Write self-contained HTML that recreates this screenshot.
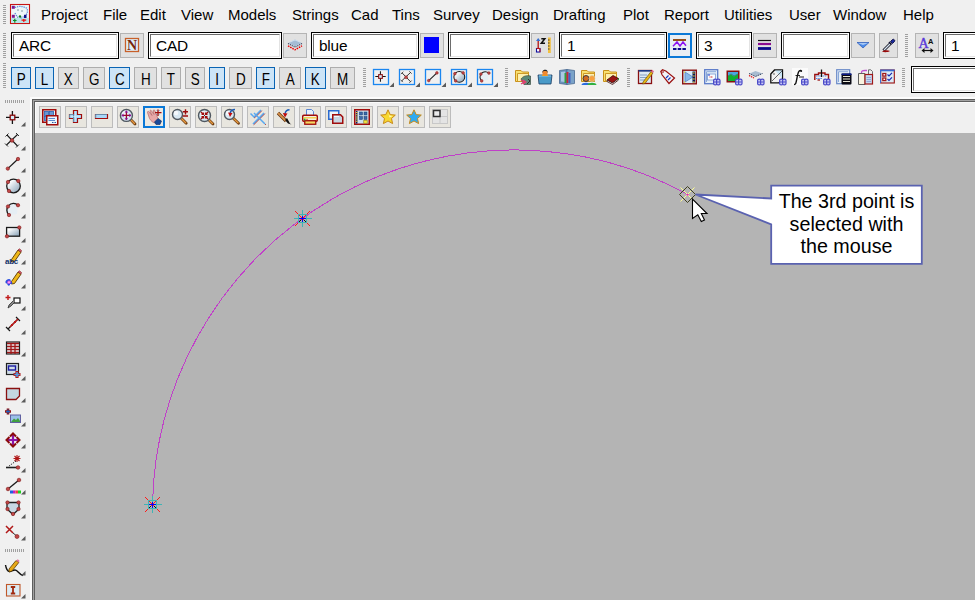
<!DOCTYPE html><html><head><meta charset="utf-8"><style>
*{margin:0;padding:0;box-sizing:border-box}
html,body{width:975px;height:600px;overflow:hidden;background:#f0f0f0;font-family:"Liberation Sans",sans-serif;color:#000}
.a{position:absolute}
.m{position:absolute;top:6px;font-size:15px;line-height:17px;color:#000;white-space:nowrap}
.grip{position:absolute;width:3px;background:repeating-linear-gradient(to bottom,#a0a0a0 0 1px,transparent 1px 2px)}
.gripv{position:absolute;height:3px;background:repeating-linear-gradient(to right,#a0a0a0 0 1px,transparent 1px 2px)}
.inp{position:absolute;top:32px;height:27px;border:1px solid #000;background:#fff}
.inp::after{content:"";position:absolute;left:1px;top:1px;right:1px;bottom:1px;border-top:1px solid #6d6d6d;border-left:1px solid #6d6d6d;border-right:1px solid #e3e3e3;border-bottom:1px solid #e3e3e3}
.inp span{position:absolute;left:7px;top:4px;font-size:15.4px;line-height:17px;letter-spacing:-0.2px}
.btn{position:absolute;top:33px;height:25px;width:24px;border:1px solid #b4b4b4;background:#e1e1e1}
.lb{position:absolute;top:67px;height:22px;border:1px solid #adadad;background:#e1e1e1;font-size:16px;line-height:24px;text-align:center}
.lb span{display:inline-block;transform:scaleX(0.84)}
.lb.on{border-color:#0a64b4;background:#cce4f7}
.cb{position:absolute;top:106px;width:22px;height:22px;border:1px solid #bcbcbc;background:#e8e6df}
</style></head><body>
<div class="grip" style="left:3px;top:5px;height:19px"></div>
<div class="m" style="left:41px">Project</div>
<div class="m" style="left:103px">File</div>
<div class="m" style="left:140px">Edit</div>
<div class="m" style="left:181px">View</div>
<div class="m" style="left:228px">Models</div>
<div class="m" style="left:292px">Strings</div>
<div class="m" style="left:351px">Cad</div>
<div class="m" style="left:392px">Tins</div>
<div class="m" style="left:433px">Survey</div>
<div class="m" style="left:492px">Design</div>
<div class="m" style="left:553px">Drafting</div>
<div class="m" style="left:623px">Plot</div>
<div class="m" style="left:664px">Report</div>
<div class="m" style="left:724px">Utilities</div>
<div class="m" style="left:789px">User</div>
<div class="m" style="left:833px">Window</div>
<div class="m" style="left:903px">Help</div>
<div class="grip" style="left:3px;top:33px;height:25px"></div>
<div class="inp" style="left:11px;top:32px;width:108px;height:27px"><span>ARC</span></div>
<div class="btn" style="left:120px;width:24px;"></div>
<div class="inp" style="left:148px;top:32px;width:134px;height:27px"><span>CAD</span></div>
<div class="btn" style="left:283px;width:24px;"></div>
<div class="inp" style="left:311px;top:32px;width:108px;height:27px"><span>blue</span></div>
<div class="btn" style="left:420px;width:24px;"></div>
<div class="a" style="left:424px;top:37px;width:15px;height:16px;background:#0000ff"></div>
<div class="inp" style="left:448px;top:32px;width:82px;height:27px"></div>
<div class="btn" style="left:531px;width:24px;"></div>
<div class="inp" style="left:559px;top:32px;width:108px;height:27px"><span>1</span></div>
<div class="btn" style="left:668px;width:24px;border:2px solid #0a78d7;background:#e8eef4"></div>
<div class="inp" style="left:696px;top:32px;width:56px;height:27px"><span>3</span></div>
<div class="btn" style="left:753px;width:24px;"></div>
<div class="inp" style="left:781px;top:32px;width:69px;height:27px"></div>
<div class="btn" style="left:851px;width:24px;"></div>
<div class="btn" style="left:879px;width:19px;"></div>
<div class="grip" style="left:905px;top:34px;height:23px"></div>
<div class="btn" style="left:915px;width:24px;"></div>
<div class="inp" style="left:943px;top:32px;width:60px;height:27px"><span>1</span></div>
<div class="grip" style="left:3px;top:63px;height:26px"></div>
<div class="lb on" style="left:11px;width:20px"><span>P</span></div>
<div class="lb on" style="left:35px;width:19px"><span>L</span></div>
<div class="lb" style="left:58px;width:21px"><span>X</span></div>
<div class="lb" style="left:83px;width:22px"><span>G</span></div>
<div class="lb on" style="left:109px;width:21px"><span>C</span></div>
<div class="lb" style="left:134px;width:23px"><span>H</span></div>
<div class="lb" style="left:161px;width:20px"><span>T</span></div>
<div class="lb" style="left:185px;width:20px"><span>S</span></div>
<div class="lb on" style="left:209px;width:16px"><span>I</span></div>
<div class="lb" style="left:229px;width:23px"><span>D</span></div>
<div class="lb on" style="left:256px;width:19px"><span>F</span></div>
<div class="lb" style="left:279px;width:22px"><span>A</span></div>
<div class="lb on" style="left:305px;width:21px"><span>K</span></div>
<div class="lb" style="left:330px;width:25px"><span>M</span></div>
<div class="grip" style="left:363px;top:68px;height:20px"></div>
<div class="grip" style="left:505px;top:68px;height:20px"></div>
<div class="grip" style="left:627px;top:68px;height:20px"></div>
<div class="grip" style="left:902px;top:68px;height:20px"></div>
<div class="inp" style="left:911px;top:66px;width:80px;height:27px"></div>
<div class="a" style="left:30px;top:97px;width:945px;height:503px;background:#fcfcfc"></div>
<div class="a" style="left:32px;top:99px;width:943px;height:501px;background:#5f5f5f"></div>
<div class="a" style="left:33px;top:100px;width:942px;height:500px;background:#a2a2a2"></div>
<div class="a" style="left:34px;top:101px;width:941px;height:499px;background:#5f5f5f"></div>
<div class="a" style="left:35px;top:102px;width:940px;height:31px;background:#fbfbfb"></div>
<div class="a" style="left:36px;top:103px;width:939px;height:30px;background:#f0f0f0"></div>
<div class="a" style="left:35px;top:133px;width:940px;height:467px;background:#b4b4b4"></div>
<div class="cb" style="left:39px"></div>
<div class="cb" style="left:65px"></div>
<div class="cb" style="left:91px"></div>
<div class="cb" style="left:117px"></div>
<div class="cb" style="left:143px;border:2px solid #0a78d7;background:#ede9e2"></div>
<div class="cb" style="left:169px"></div>
<div class="cb" style="left:195px"></div>
<div class="cb" style="left:221px"></div>
<div class="cb" style="left:247px"></div>
<div class="cb" style="left:273px"></div>
<div class="cb" style="left:299px"></div>
<div class="cb" style="left:325px"></div>
<div class="cb" style="left:351px"></div>
<div class="cb" style="left:377px"></div>
<div class="cb" style="left:403px"></div>
<div class="cb" style="left:429px"></div>
<div class="gripv" style="left:5px;top:100px;width:20px"></div>
<div class="gripv" style="left:5px;top:549px;width:19px"></div>
<svg class="a" style="left:0;top:0" width="975" height="600" viewBox="0 0 975 600"><g transform="translate(5,110)"><path d="M7.4 1V14M1 7.4H14" stroke="#141414" stroke-width="1.3"/><rect x="5.2" y="5.2" width="4.6" height="4.6" fill="#d4ecf8" stroke="#8a0808" stroke-width="1.3"/></g><path d="M21 126.5L25.5 126.5L25.5 122Z" fill="#5a5a5a"/><g transform="translate(5,132)"><path d="M1.5 13L12.5 2.5M2 3L12.5 14" stroke="#1a1a1a" stroke-width="1.1"/><path d="M0 11.5L3 14.5M11 1L14 4M0.5 4.5L3.5 1.5M11 15.5L14 12.5" stroke="#1a1a1a" stroke-width="0.9"/><circle cx="7" cy="8.5" r="1.8" fill="#c04848" stroke="#801818" stroke-width="0.6"/></g><path d="M21 150.5L25.5 150.5L25.5 146Z" fill="#5a5a5a"/><g transform="translate(5,156)"><path d="M2.8 12.6L13 3" stroke="#1a1a1a" stroke-width="1.3"/><circle cx="2.8" cy="12.6" r="1.7" fill="#c04848" stroke="#801818" stroke-width="0.6"/><circle cx="13" cy="3" r="1.7" fill="#c04848" stroke="#801818" stroke-width="0.6"/></g><path d="M21 172.5L25.5 172.5L25.5 168Z" fill="#5a5a5a"/><g transform="translate(5,178)"><defs><linearGradient id="gc" x1="0.2" y1="0.2" x2="0.9" y2="0.9"><stop offset="0" stop-color="#ffffff"/><stop offset="1" stop-color="#90a8bc"/></linearGradient></defs><circle cx="8.5" cy="8" r="6.8" fill="url(#gc)" stroke="#1a1a1a" stroke-width="1.3"/><circle cx="3" cy="4" r="1.7" fill="#c04848" stroke="#801818" stroke-width="0.6"/><circle cx="13.3" cy="3" r="1.7" fill="#c04848" stroke="#801818" stroke-width="0.6"/><circle cx="4" cy="13" r="1.7" fill="#c04848" stroke="#801818" stroke-width="0.6"/></g><path d="M21 196.5L25.5 196.5L25.5 192Z" fill="#5a5a5a"/><g transform="translate(5,202)"><path d="M4 13A6.3 6.3 0 0 1 13 3.2L12 12Z" fill="#e6eef4"/><path d="M4 13A6.3 6.3 0 0 1 13 3.2" fill="none" stroke="#1a1a1a" stroke-width="1.3"/><circle cx="3" cy="4.5" r="1.7" fill="#c04848" stroke="#801818" stroke-width="0.6"/><circle cx="13" cy="3.2" r="1.7" fill="#c04848" stroke="#801818" stroke-width="0.6"/><circle cx="4" cy="13" r="1.7" fill="#c04848" stroke="#801818" stroke-width="0.6"/></g><path d="M21 218.5L25.5 218.5L25.5 214Z" fill="#5a5a5a"/><g transform="translate(5,224)"><rect x="1.6" y="3.5" width="13" height="8.7" fill="url(#gc)" stroke="#1a1a1a" stroke-width="1.3"/><circle cx="14.3" cy="3.5" r="1.7" fill="#c04848" stroke="#801818" stroke-width="0.6"/><circle cx="2" cy="12.3" r="1.7" fill="#c04848" stroke="#801818" stroke-width="0.6"/></g><path d="M21 242.5L25.5 242.5L25.5 238Z" fill="#5a5a5a"/><g transform="translate(5,248)"><path d="M6.5 11.5L13 2L16 4.2L9.5 13.5L6.5 14Z" fill="#f0b818" stroke="#5a3a00" stroke-width="0.9"/><path d="M13 2L16 4.2L16.5 2.5L14.5 0.8Z" fill="#d86070" stroke="#7a2020" stroke-width="0.6"/><text x="0" y="15.8" font-family="Liberation Sans" font-weight="bold" font-size="8" fill="#10306a" letter-spacing="-0.3">abc</text></g><path d="M21 264.5L25.5 264.5L25.5 260Z" fill="#5a5a5a"/><g transform="translate(5,270)"><path d="M6.5 11.5L13 2L16 4.2L9.5 13.5L6.5 14Z" fill="#f0b818" stroke="#5a3a00" stroke-width="0.9"/><path d="M13 2L16 4.2L16.5 2.5L14.5 0.8Z" fill="#d86070" stroke="#7a2020" stroke-width="0.6"/><path d="M1.5 10C4 8 6.5 9 5.5 11.5C8 11 8 14.5 5 14C5.5 16.5 1.5 16 2.5 13.5C0 14 0 11 1.5 10Z" fill="#2a50e0"/><circle cx="4" cy="12.3" r="1.7" fill="#e050e0"/><circle cx="4" cy="12.3" r="0.7" fill="#fff"/></g><path d="M21 288.5L25.5 288.5L25.5 284Z" fill="#5a5a5a"/><g transform="translate(5,294)"><path d="M3 1V6M0.5 3.5H5.5" stroke="#c01818" stroke-width="1.4"/><rect x="9" y="4" width="6" height="5" fill="#fff" stroke="#101010" stroke-width="1.2"/><path d="M8 7L4 11L3 14L6 12L10 8" fill="#888" stroke="#303030" stroke-width="0.8"/></g><path d="M21 310.5L25.5 310.5L25.5 306Z" fill="#5a5a5a"/><g transform="translate(5,316)"><path d="M1 11L5 15M11 1L15 5M3 13L13 3" stroke="#181818" stroke-width="1.2"/><path d="M5 11L13 3" stroke="#c01818" stroke-width="1.3"/><path d="M6 8L8 10M9 5L11 7" stroke="#c01818" stroke-width="1"/></g><path d="M21 334.5L25.5 334.5L25.5 330Z" fill="#5a5a5a"/><g transform="translate(5,340)"><rect x="1.5" y="2" width="13" height="12" fill="#e8eef2" stroke="#202020" stroke-width="1.2"/><path d="M2 3.5H14M2 6.5H14M2 9.5H14M2 12.5H14" stroke="#a01818" stroke-width="1.6"/><path d="M6 3V14M10 3V14" stroke="#a01818" stroke-width="1.3"/></g><path d="M21 356.5L25.5 356.5L25.5 352Z" fill="#5a5a5a"/><g transform="translate(5,362)"><rect x="1.5" y="1.5" width="12" height="11" fill="#d0dde6" stroke="#202020" stroke-width="1.2"/><rect x="3.5" y="4" width="7" height="4" fill="none" stroke="#1a1aa0" stroke-width="1.4"/><path d="M12 9V16M8.5 12.5H15.5" stroke="#b01818" stroke-width="3.2"/><path d="M12 10V15M9.5 12.5H14.5" stroke="#4aa0e8" stroke-width="1.5"/></g><path d="M21 380.5L25.5 380.5L25.5 376Z" fill="#5a5a5a"/><g transform="translate(5,386)"><path d="M1.5 2.5H14.5V10L11 13.5H1.5Z" fill="#c4d6e0" stroke="#8a1010" stroke-width="1.3"/></g><path d="M21 402.5L25.5 402.5L25.5 398Z" fill="#5a5a5a"/><g transform="translate(5,408)"><path d="M3 0.5V6.5M0 3.5H6" stroke="#8a1010" stroke-width="2.6"/><path d="M3 1.5V5.5M1 3.5H5" stroke="#2060c0" stroke-width="1.2"/><rect x="5.5" y="7" width="10" height="7.5" fill="#9ac0e8" stroke="#6060a0" stroke-width="1"/><path d="M6 14L9 10.5L11 12L13 10L15 13V14Z" fill="#40a040"/></g><path d="M21 426.5L25.5 426.5L25.5 422Z" fill="#5a5a5a"/><g transform="translate(5,432)"><path d="M8 2.5V13.5M2.5 8H13.5" stroke="#8c14a8" stroke-width="2.2"/><path d="M5 4.5L8 1.5L11 4.5M5 11.5L8 14.5L11 11.5M4.5 5L1.5 8L4.5 11M11.5 5L14.5 8L11.5 11" fill="none" stroke="#8a0a0a" stroke-width="2"/></g><path d="M21 448.5L25.5 448.5L25.5 444Z" fill="#5a5a5a"/><g transform="translate(5,454)"><path d="M12 1V8M8.5 4.5H15.5M9.5 2L14.5 7M14.5 2L9.5 7" stroke="#b01818" stroke-width="1.1"/><path d="M11 7L4 12" stroke="#202020" stroke-width="1" stroke-dasharray="1.2 1.2"/><path d="M1 13.5H13" stroke="#202020" stroke-width="1.6"/><circle cx="13" cy="13.5" r="1.8" fill="#c04848" stroke="#801818" stroke-width="0.6"/></g><path d="M21 472.5L25.5 472.5L25.5 468Z" fill="#5a5a5a"/><g transform="translate(5,478)"><path d="M3 11L14 2" stroke="#181818" stroke-width="1.3"/><circle cx="3" cy="11" r="1.8" fill="#c04848" stroke="#801818" stroke-width="0.6"/><circle cx="14" cy="2" r="1.8" fill="#c04848" stroke="#801818" stroke-width="0.6"/><rect x="5" y="12.5" width="3" height="3" fill="#2060e0"/><rect x="8" y="12.5" width="2.5" height="3" fill="#c020c0"/><rect x="10.5" y="12.5" width="2.5" height="3" fill="#f04040"/><rect x="13" y="12.5" width="3" height="3" fill="#20d020"/></g><path d="M21 494.5L25.5 494.5L25.5 490Z" fill="#5a5a5a"/><g transform="translate(5,500)"><path d="M2 2.5H14V9L8 14.5L2 9Z" fill="#c8d8e4" stroke="#202020" stroke-width="1.3"/><circle cx="2.5" cy="2.5" r="1.7" fill="#c04848" stroke="#801818" stroke-width="0.6"/><circle cx="13.5" cy="2.5" r="1.7" fill="#c04848" stroke="#801818" stroke-width="0.6"/><circle cx="2.5" cy="9" r="1.7" fill="#c04848" stroke="#801818" stroke-width="0.6"/><circle cx="13.5" cy="9" r="1.7" fill="#c04848" stroke="#801818" stroke-width="0.6"/><circle cx="8" cy="14" r="1.7" fill="#c04848" stroke="#801818" stroke-width="0.6"/></g><path d="M21 518.5L25.5 518.5L25.5 514Z" fill="#5a5a5a"/><g transform="translate(5,524)"><path d="M1 2L8 9M8 2L1 9" stroke="#b01818" stroke-width="1.5"/><path d="M8 9L13 13" stroke="#303030" stroke-width="1"/><circle cx="12" cy="12.5" r="2" fill="#c04848" stroke="#801818" stroke-width="0.6"/></g><path d="M21 540.5L25.5 540.5L25.5 536Z" fill="#5a5a5a"/><g transform="translate(5,559)"><path d="M0.5 6C1 9 2.5 13 5 12.5C8 12 9 10 11.5 11.5C13.5 13 15 16 18 16.5" fill="none" stroke="#101010" stroke-width="1.4"/><path d="M4 10L11 1.5L13.8 3.5L7 12L4 13Z" fill="#e8a818" stroke="#5a3a00" stroke-width="0.8"/><path d="M11 1.5L13.8 3.5L14.5 1.8L12.8 0.3Z" fill="#e07a9a"/></g><path d="M21 575.5L25.5 575.5L25.5 571Z" fill="#5a5a5a"/><g transform="translate(5,582)"><rect x="1.5" y="2.5" width="13.5" height="11.5" fill="#dcecf4" stroke="#c0582a" stroke-width="1.1"/><path d="M5.8 5H10.2M5.8 11.5H10.2M8 5V11.5" stroke="#a02a10" stroke-width="1.8"/></g><path d="M21 598.5L25.5 598.5L25.5 594Z" fill="#5a5a5a"/><rect x="373.5" y="69.5" width="15" height="15" fill="none" stroke="#1a86f0" stroke-width="1.3"/><g transform="translate(374.5,70.5) scale(0.8)"><path d="M7.4 1V14M1 7.4H14" stroke="#141414" stroke-width="1.3"/><rect x="5.2" y="5.2" width="4.6" height="4.6" fill="#d4ecf8" stroke="#8a0808" stroke-width="1.3"/></g><path d="M389.5 87.0L394.0 87.0L394.0 82.5Z" fill="#5a5a5a"/><rect x="399.5" y="69.5" width="15" height="15" fill="none" stroke="#1a86f0" stroke-width="1.3"/><g transform="translate(400.5,70.5) scale(0.8)"><path d="M1.5 13L12.5 2.5M2 3L12.5 14" stroke="#1a1a1a" stroke-width="1.1"/><path d="M0 11.5L3 14.5M11 1L14 4M0.5 4.5L3.5 1.5M11 15.5L14 12.5" stroke="#1a1a1a" stroke-width="0.9"/><circle cx="7" cy="8.5" r="1.8" fill="#c04848" stroke="#801818" stroke-width="0.6"/></g><path d="M415.5 87.0L420.0 87.0L420.0 82.5Z" fill="#5a5a5a"/><rect x="425.5" y="69.5" width="15" height="15" fill="none" stroke="#1a86f0" stroke-width="1.3"/><g transform="translate(426.5,70.5) scale(0.8)"><path d="M2.8 12.6L13 3" stroke="#1a1a1a" stroke-width="1.3"/><circle cx="2.8" cy="12.6" r="1.7" fill="#c04848" stroke="#801818" stroke-width="0.6"/><circle cx="13" cy="3" r="1.7" fill="#c04848" stroke="#801818" stroke-width="0.6"/></g><path d="M441.5 87.0L446.0 87.0L446.0 82.5Z" fill="#5a5a5a"/><rect x="451.5" y="69.5" width="15" height="15" fill="none" stroke="#1a86f0" stroke-width="1.3"/><g transform="translate(452.5,70.5) scale(0.8)"><defs><linearGradient id="gc" x1="0.2" y1="0.2" x2="0.9" y2="0.9"><stop offset="0" stop-color="#ffffff"/><stop offset="1" stop-color="#90a8bc"/></linearGradient></defs><circle cx="8.5" cy="8" r="6.8" fill="url(#gc)" stroke="#1a1a1a" stroke-width="1.3"/><circle cx="3" cy="4" r="1.7" fill="#c04848" stroke="#801818" stroke-width="0.6"/><circle cx="13.3" cy="3" r="1.7" fill="#c04848" stroke="#801818" stroke-width="0.6"/><circle cx="4" cy="13" r="1.7" fill="#c04848" stroke="#801818" stroke-width="0.6"/></g><path d="M467.5 87.0L472.0 87.0L472.0 82.5Z" fill="#5a5a5a"/><rect x="477.5" y="69.5" width="15" height="15" fill="none" stroke="#1a86f0" stroke-width="1.3"/><g transform="translate(478.5,70.5) scale(0.8)"><path d="M4 13A6.3 6.3 0 0 1 13 3.2L12 12Z" fill="#e6eef4"/><path d="M4 13A6.3 6.3 0 0 1 13 3.2" fill="none" stroke="#1a1a1a" stroke-width="1.3"/><circle cx="3" cy="4.5" r="1.7" fill="#c04848" stroke="#801818" stroke-width="0.6"/><circle cx="13" cy="3.2" r="1.7" fill="#c04848" stroke="#801818" stroke-width="0.6"/><circle cx="4" cy="13" r="1.7" fill="#c04848" stroke="#801818" stroke-width="0.6"/></g><path d="M493.5 87.0L498.0 87.0L498.0 82.5Z" fill="#5a5a5a"/><g transform="translate(515,69)"><path d="M0.5 1.5H6L7.5 3H13.5V12.5H0.5Z" fill="#f8e070" stroke="#c8901a" stroke-width="1"/><path d="M2.5 4.5H13.5V12.5H2.5Z" fill="#fdf0b0" stroke="#c8901a" stroke-width="0.9"/><path d="M6 10C8 7 12 6 15.5 7V15.5H9Z" fill="#5a8a78" stroke="#2a3a30" stroke-width="0.6"/><path d="M13 10L15 12L12 15" fill="none" stroke="#303030" stroke-width="1"/><path d="M6 11L9 13L6 15M8 11L11 13L8 15" fill="none" stroke="#e04070" stroke-width="1.1"/></g><g transform="translate(537,69)"><path d="M1 6H15L14 15H2Z" fill="#4a9ac8" stroke="#1a3a60" stroke-width="0.8"/><path d="M2 7H14" stroke="#8ac8e8" stroke-width="1"/><path d="M5 7C5 4 11 4 11 7Z" fill="#f0a020"/><circle cx="8" cy="3.8" r="2.6" fill="#f08a30"/><path d="M5.5 2.5C6 0 10.5 0 10.5 2.5V4L9.5 2H6.5L5.5 4Z" fill="#202020"/></g><g transform="translate(559,69)"><path d="M0.5 1.5L8 0.5V15.5L0.5 14.5Z" fill="#6a92bc" stroke="#4a6a90" stroke-width="0.8"/><path d="M8 0.5L15.5 1.5V14.5L8 15.5Z" fill="#7aa2c8" stroke="#4a6a90" stroke-width="0.8"/><path d="M2 3L6 2.5V13L2 12.5Z" fill="#aac8e4"/><rect x="5.5" y="4" width="2" height="10" fill="#30a040"/><rect x="7.5" y="3" width="2" height="11" fill="#c82838"/><rect x="9.5" y="4" width="2" height="10" fill="#4060c0"/></g><g transform="translate(581,69)"><path d="M0.5 1.5H6L7.5 3H13.5V12.5H0.5Z" fill="#f8e070" stroke="#c8901a" stroke-width="1"/><path d="M2.5 4.5H13.5V12.5H2.5Z" fill="#fdf0b0" stroke="#c8901a" stroke-width="0.9"/><circle cx="5" cy="9.5" r="3" fill="#d06a20" stroke="#303040" stroke-width="0.9"/><path d="M0.5 16C0.5 13 9.5 13 9.5 16Z" fill="#2a6ae0"/><circle cx="11" cy="9.5" r="3" fill="#f8a040" stroke="#d0d0b0" stroke-width="0.6"/><path d="M6.5 16C6.5 13 15.5 13 15.5 16Z" fill="#30b040"/></g><g transform="translate(603,69)"><path d="M0.5 1.5H6L7.5 3H13.5V12.5H0.5Z" fill="#f8e070" stroke="#c8901a" stroke-width="1"/><path d="M2.5 4.5H13.5V12.5H2.5Z" fill="#fdf0b0" stroke="#c8901a" stroke-width="0.9"/><path d="M4 11L10 6.5L15.5 9.5L9.5 14Z" fill="#9a1414" stroke="#3a0a0a" stroke-width="0.8"/><path d="M4 11V12.5L9.5 15.5L15.5 11V9.5L9.5 14Z" fill="#f8f8f8" stroke="#3a0a0a" stroke-width="0.8"/><path d="M15.5 9.5V11" stroke="#30a040" stroke-width="1"/></g><g transform="translate(638,69)"><rect x="0.5" y="1.5" width="13" height="13" fill="#dceaf6" stroke="#8a1010" stroke-width="1.3"/><rect x="0.5" y="1" width="12" height="1.6" fill="#1a3a8a"/><path d="M2 6H9M2 8.5H9M2 11H8" stroke="#7a98c0" stroke-width="0.9"/><path d="M5 13L13 2.5L15 4L7 14.5L4.5 15Z" fill="#e8b818" stroke="#5a4000" stroke-width="0.6"/><path d="M13 2.5L15 4L16 2.5L14.5 0.8Z" fill="#e07090"/></g><g transform="translate(660,69)"><path d="M0.8 2.5L2.5 0.8L5.8 2L14.5 9L9 14.5L2 5.8Z" fill="#f2f4f8" stroke="#9a1010" stroke-width="1.2"/><circle cx="2.8" cy="2.8" r="0.9" fill="#fff" stroke="#9a1010" stroke-width="0.7"/><path d="M6 9L8.5 6.5M8 11L10.5 8.5" stroke="#1a3ac0" stroke-width="1.2"/></g><g transform="translate(682,69)"><rect x="0.7" y="1.2" width="13.6" height="13.6" fill="#d8ecf8" stroke="#8a1010" stroke-width="1.4"/><path d="M3 3L11 8L3 13Z" fill="#8ab8e8" stroke="#4a7ac0" stroke-width="0.7"/><rect x="10.5" y="2.5" width="2.5" height="11" fill="#0a1a5a"/><path d="M10.8 4H12.7M10.8 7H12.7M10.8 10H12.7M10.8 13H12.7" stroke="#f0d020" stroke-width="1"/><rect x="2" y="2.5" width="1.2" height="1.2" fill="#f0d020"/><rect x="2" y="12.5" width="1.2" height="1.2" fill="#f0d020"/></g><g transform="translate(704,69)"><rect x="0.7" y="0.7" width="13" height="14" fill="#e4eef8" stroke="#5a7ac8" stroke-width="1.3"/><path d="M2.5 2.7H12M2.5 2.7V13" stroke="#8aa8d8" stroke-width="1"/><rect x="3.5" y="5" width="8" height="6" fill="#fafcff" stroke="#7a9ad0" stroke-width="0.8"/><path d="M4 6H6" stroke="#1a3ad0" stroke-width="1.1"/><path d="M5.5 8H9" stroke="#d01818" stroke-width="1.1" stroke-dasharray="1 0.6"/><g transform="translate(9,9.5)"><rect x="0.6" y="0.6" width="3.4" height="5.8" rx="1.5" fill="#c8c8f4" stroke="#4a4ac8" stroke-width="1.2"/><rect x="3.6" y="0.6" width="3.4" height="5.8" rx="1.5" fill="#c8c8f4" stroke="#4a4ac8" stroke-width="1.2"/><path d="M1 3.5H6.6" stroke="#4a4ac8" stroke-width="1"/></g></g><g transform="translate(726,69)"><rect x="0.5" y="1.5" width="13" height="12" fill="#8a1010"/><rect x="2" y="3" width="10" height="9" fill="#4aa8e0"/><path d="M2 12V7L5 5.5L8 7.5L12 5V12Z" fill="#10b030"/><path d="M2 7L5 5L8 7L12 5" fill="none" stroke="#3a7a5a" stroke-width="0.8"/><g transform="translate(9,9.5)"><rect x="0.6" y="0.6" width="3.4" height="5.8" rx="1.5" fill="#c8c8f4" stroke="#4a4ac8" stroke-width="1.2"/><rect x="3.6" y="0.6" width="3.4" height="5.8" rx="1.5" fill="#c8c8f4" stroke="#4a4ac8" stroke-width="1.2"/><path d="M1 3.5H6.6" stroke="#4a4ac8" stroke-width="1"/></g></g><g transform="translate(748,69)"><path d="M1.5 4.5L7.5 2L14.5 4.5L7.5 7.5Z" fill="#a8bcd0"/><path d="M1 4.5L7.5 7.5L14.5 4.5" fill="none" stroke="#1a2a4a" stroke-width="0.9" stroke-dasharray="1.2 0.8"/><path d="M1 6.5L6 9" stroke="#e01010" stroke-width="1.2" stroke-dasharray="1.4 0.8"/><g transform="translate(9,9.5)"><rect x="0.6" y="0.6" width="3.4" height="5.8" rx="1.5" fill="#c8c8f4" stroke="#4a4ac8" stroke-width="1.2"/><rect x="3.6" y="0.6" width="3.4" height="5.8" rx="1.5" fill="#c8c8f4" stroke="#4a4ac8" stroke-width="1.2"/><path d="M1 3.5H6.6" stroke="#4a4ac8" stroke-width="1"/></g></g><g transform="translate(770,69)"><path d="M0.8 5L4.5 1H12.5V10L9 13.8H0.8Z" fill="#f2f2f2" stroke="#101010" stroke-width="1.3"/><path d="M5 1.5H12V9" fill="#c8e4f4"/><path d="M2 12L12 2M4 4V6" stroke="#404040" stroke-width="0.8"/><g transform="translate(9,9.5)"><rect x="0.6" y="0.6" width="3.4" height="5.8" rx="1.5" fill="#c8c8f4" stroke="#4a4ac8" stroke-width="1.2"/><rect x="3.6" y="0.6" width="3.4" height="5.8" rx="1.5" fill="#c8c8f4" stroke="#4a4ac8" stroke-width="1.2"/><path d="M1 3.5H6.6" stroke="#4a4ac8" stroke-width="1"/></g></g><g transform="translate(792,69)"><rect x="0" y="-1" width="16" height="17" fill="#fbfbfb"/><path d="M2 15.5C4 15.5 4 14 5 9C6 4 6.5 1 9 1.5" fill="none" stroke="#101010" stroke-width="1.4"/><circle cx="9.2" cy="2" r="1" fill="#101010"/><path d="M3.5 6.5H8" stroke="#101010" stroke-width="0.9"/><path d="M7 8H12" stroke="#303030" stroke-width="1.1"/><g transform="translate(9,9.5)"><rect x="0.6" y="0.6" width="3.4" height="5.8" rx="1.5" fill="#c8c8f4" stroke="#4a4ac8" stroke-width="1.2"/><rect x="3.6" y="0.6" width="3.4" height="5.8" rx="1.5" fill="#c8c8f4" stroke="#4a4ac8" stroke-width="1.2"/><path d="M1 3.5H6.6" stroke="#4a4ac8" stroke-width="1"/></g></g><g transform="translate(814,69)"><path d="M0.8 11V5.5H4.5V4H11V5.5H14.5V10" fill="none" stroke="#9a1010" stroke-width="1.4"/><path d="M2 7H13M2 9.5H8" stroke="#5a8ae8" stroke-width="1.2" stroke-dasharray="1.5 0.7"/><path d="M7.5 0.5V8" stroke="#101010" stroke-width="1.3"/><path d="M3.5 11H6" stroke="#9a1010" stroke-width="1.3"/><g transform="translate(9,9.5)"><rect x="0.6" y="0.6" width="3.4" height="5.8" rx="1.5" fill="#c8c8f4" stroke="#4a4ac8" stroke-width="1.2"/><rect x="3.6" y="0.6" width="3.4" height="5.8" rx="1.5" fill="#c8c8f4" stroke="#4a4ac8" stroke-width="1.2"/><path d="M1 3.5H6.6" stroke="#4a4ac8" stroke-width="1"/></g></g><g transform="translate(836,69)"><rect x="0.7" y="0.7" width="13" height="14" fill="#e4eef8" stroke="#6a8ac8" stroke-width="1.2"/><path d="M2.5 2.7H12M2.5 2.7V13" stroke="#8aa8d8" stroke-width="1"/><rect x="5.5" y="4.5" width="10" height="11" rx="1" fill="#0a0a14"/><rect x="5.5" y="4.5" width="10" height="1.5" fill="#0a1a8a"/><path d="M7 7.5H14M7 10H14M7 12.5H14" stroke="#e8e8d8" stroke-width="1.2"/></g><g transform="translate(858,69)"><path d="M0.5 4.5H7V15.5H0.5Z" fill="#f8f2e0" stroke="#606060" stroke-width="1"/><path d="M3.5 4C3.5 2 4 1.5 7 1.5H9" fill="none" stroke="#c050d0" stroke-width="1.3"/><path d="M10.5 0.8H12.8L14.5 2.5V6" fill="none" stroke="#606060" stroke-width="0.9"/><path d="M10.5 0.8V5" stroke="#606060" stroke-width="0.9"/><rect x="7" y="5.5" width="7.5" height="9.5" fill="#c4d8f0" stroke="#a01818" stroke-width="1.2"/><path d="M8.5 8.5H13M8.5 10.5H13M8.5 12.5H13" stroke="#8a9ad0" stroke-width="0.8"/></g><g transform="translate(880,69)"><rect x="0.7" y="1" width="13.6" height="13" fill="#dcecf6" stroke="#9a1010" stroke-width="1.1"/><rect x="0.2" y="0.5" width="14.4" height="1.8" fill="#3a6ad0"/><path d="M0.5 1V14" stroke="#3a6ad0" stroke-width="1"/><rect x="2.8" y="4.5" width="3" height="2.6" fill="#fff" stroke="#a01818" stroke-width="1.3"/><rect x="2.8" y="9" width="3" height="2.6" fill="#fff" stroke="#a01818" stroke-width="1.3"/><path d="M7.5 5.5L9 7L12 3.8M7.5 10L9 11.5L12 8.3" fill="none" stroke="#1a2ab0" stroke-width="1.2"/></g><g transform="translate(124,37)"><rect x="1.5" y="1.5" width="13" height="13" fill="#dff0fa" stroke="#c8602a" stroke-width="1.3"/><text x="8" y="12.8" text-anchor="middle" font-family="Liberation Serif" font-weight="bold" font-size="14" fill="#7a260a">N</text></g><g transform="translate(287,37)"><path d="M1.5 6L8 2.5L14.5 6L8 9.5Z" fill="#a4bcd4"/><path d="M3 5L8 3L13 5" fill="none" stroke="#d0e0f0" stroke-width="1"/><path d="M1 6.5L8 10.2L15 6.5" fill="none" stroke="#3a4460" stroke-width="1.1" stroke-dasharray="1.2 0.9"/><path d="M1 8.8L8 12.8L15 8.8" fill="none" stroke="#e80000" stroke-width="1.4" stroke-dasharray="1.6 0.9"/></g><g transform="translate(535,37)"><path d="M3.2 3.5V11.5" stroke="#b01010" stroke-width="1.3"/><path d="M1 4L3.2 1L5.4 4Z" fill="#3a70d0"/><rect x="1.5" y="11.5" width="3.5" height="3.5" fill="#fff" stroke="#1010a0" stroke-width="1.1"/><path d="M1.5 11.5H5V15" fill="none" stroke="#c01010" stroke-width="1"/><path d="M6.3 1.8H9.8L6.3 6.2H10" fill="none" stroke="#101010" stroke-width="1.5"/><rect x="13" y="0.5" width="2.8" height="15.5" fill="#f2c040"/><path d="M13 3H14.5M13 6H14.5M13 9H14.5M13 12H14.5" stroke="#303030" stroke-width="0.9"/></g><g transform="translate(672,37)"><path d="M1 3H14" stroke="#8a3c00" stroke-width="1.8"/><path d="M1 9.2L5 5L8 9L11 5L14 8.8" fill="none" stroke="#8c10f0" stroke-width="1.5"/><path d="M1 12H14" stroke="#0a0a8a" stroke-width="1.8" stroke-dasharray="3.5 1.2"/></g><g transform="translate(757,37)"><path d="M1 3.5H14" stroke="#101010" stroke-width="1.2"/><path d="M1 7H14" stroke="#8a0a90" stroke-width="2.2"/><path d="M1 11.5H14" stroke="#0a0a8a" stroke-width="2.8"/></g><g transform="translate(855,37)"><path d="M2 5.5H14L8 11Z" fill="#4a8ae8" stroke="#1a4ab0" stroke-width="0.6"/><path d="M3 6H13L8 8Z" fill="#a8c8f4"/></g><g transform="translate(881,37)"><path d="M2.5 13.5L9.5 6.5" stroke="#1a1a2a" stroke-width="3"/><path d="M3 13L9.5 6.5" stroke="#d8e4f0" stroke-width="1.3"/><path d="M8 5L10.5 7.5" stroke="#101030" stroke-width="1.6"/><path d="M9.5 4.5L11.5 2.5C12.5 1.5 14.5 3.5 13.5 4.5L11.5 6.5Z" fill="#1a2a9a" stroke="#0a0a40" stroke-width="0.9"/><path d="M1 14.5C3 13 7 13 9 14C7 15.5 3 15.5 1 14.5Z" fill="#9a0a0a"/></g><g transform="translate(919,37)"><text x="-0.5" y="11" font-family="Liberation Serif" font-size="14" fill="#5a3ad8" stroke="#5a3ad8" stroke-width="0.4">A</text><text x="9" y="7" font-family="Liberation Sans" font-weight="bold" font-size="7.5" fill="#101010">A</text><path d="M4 13.5H13" stroke="#101010" stroke-width="1.2"/><path d="M2.5 13.5L5.5 11V16ZM14.5 13.5L11.5 11V16Z" fill="#101010"/></g><g transform="translate(10,4)"><rect x="0.5" y="0.5" width="19" height="19" fill="#eef6f8" stroke="#c81414" stroke-width="1.1"/><path d="M1 14H19V19H1Z" fill="#b8e4e8"/><path d="M5 3.5C8 2 12 2 16.5 4C18 6 17.5 9 16 11C14 13 12 13.5 10 14M5 9C6 11 7 13 9 14" fill="none" stroke="#5a8ad8" stroke-width="1.3" stroke-dasharray="1.3 0.9"/><path d="M7 6H9M11 7H13" stroke="#a0b8c0" stroke-width="1.5"/><rect x="1.8" y="1.8" width="3" height="3" fill="#7a1890"/><rect x="1.8" y="10.8" width="3" height="3" fill="#7a1890"/><rect x="14" y="10.8" width="2.5" height="3.2" fill="#10108a"/><circle cx="10" cy="12.5" r="1.2" fill="#107a20"/><path d="M4.8 14.8V18.8M3 16.5H6.6" stroke="#108a20" stroke-width="1.2"/><path d="M13.8 15V18M11.5 16.2H16.2" stroke="#f01010" stroke-width="1.2"/></g><g transform="translate(42,109)"><rect x="0.75" y="0.75" width="13" height="12.5" fill="#e6f2fa" stroke="#a00c0c" stroke-width="1.5"/><rect x="2.5" y="2.5" width="4" height="4" fill="#6a98d0" stroke="#2a60b0" stroke-width="0.8"/><rect x="7.5" y="2.5" width="4" height="4" fill="#6a98d0" stroke="#2a60b0" stroke-width="0.8"/><rect x="2.5" y="7.5" width="2" height="4" fill="#6a98d0" stroke="#2a60b0" stroke-width="0.8"/><rect x="4.75" y="6.75" width="11" height="9" fill="#eef6fc" stroke="#a00c0c" stroke-width="1.5"/><path d="M6.5 9.5H13M6.5 11.5H13" stroke="#5a8ad0" stroke-width="1"/><path d="M10 13.5H11.5M12.5 13.5H14" stroke="#2a5aa0" stroke-width="1"/></g><g transform="translate(68,109)"><path d="M5.5 1.5H9.5V5.5H13.5V9.5H9.5V13.5H5.5V9.5H1.5V5.5H5.5Z" fill="#a8d8f8" stroke="#a00c0c" stroke-width="1.2"/><path d="M5.5 13V5.5H1.5V9" fill="none" stroke="#6a8aa8" stroke-width="1"/><path d="M7.5 2.5V12.5M2.5 7.5H12.5" stroke="#d8f0ff" stroke-width="0.8" opacity="0.7"/></g><g transform="translate(94,109)"><path d="M1.5 5.5H13.5V9.5H1.5Z" fill="#a8d8f8" stroke="#a00c0c" stroke-width="1.2"/><path d="M1.5 9V5.5H13" fill="none" stroke="#6a8aa8" stroke-width="1"/></g><g transform="translate(120,109)"><path d="M10.6 10.6L15 15" stroke="#6a3a10" stroke-width="2.8" stroke-linecap="round"/><path d="M10.6 10.6L14.5 14.5" stroke="#e89a40" stroke-width="1.4" stroke-linecap="round"/><circle cx="6.4" cy="6.4" r="6" fill="#d8e8f2" stroke="#505860" stroke-width="1.4"/><circle cx="4.9" cy="4.9" r="2.7" fill="#f4f8fc"/><path d="M6.4 1.8V11M1.8 6.4H11" stroke="#9a0c2a" stroke-width="1.3"/><path d="M6.4 1.5L4.6 3.5H8.2ZM6.4 11.3L4.6 9.3H8.2ZM1.5 6.4L3.5 4.6V8.2ZM11.3 6.4L9.3 4.6V8.2Z" fill="#8a10a0"/></g><g transform="translate(146,109)"><path d="M1.5 3.5C1 2.5 2.5 2 3 2.8L6 6.5L4 2.2C3.6 1.2 5 0.8 5.5 1.8L8 5.5L7.2 1.8C7 0.8 8.4 0.6 8.8 1.5L10.5 6C11 7 11.5 9 12.5 10.5L10 14C7 14 5 12 3.5 9.5Z" fill="#e8a8a8" stroke="#b06a6a" stroke-width="0.7"/><path d="M8.5 13L12 9.5L15.5 12L14 15.5H10Z" fill="#1a4a98" stroke="#0a2a60" stroke-width="0.6"/><path d="M12 0.5V7M9 3.7H15.5" stroke="#a00c0c" stroke-width="1.3"/><path d="M10.5 2L11 1.5M13.5 6L13 5.5M13.5 1.5L14 2M10.5 5.5L11 5" stroke="#3a7ac0" stroke-width="1"/></g><g transform="translate(172,109)"><path d="M9.0 9.0L14.2 14.2" stroke="#6a3a10" stroke-width="2.8" stroke-linecap="round"/><path d="M9.0 9.0L13.7 13.7" stroke="#e89a40" stroke-width="1.4" stroke-linecap="round"/><circle cx="5.5" cy="5.5" r="5" fill="#d8e8f2" stroke="#505860" stroke-width="1.4"/><circle cx="4.0" cy="4.0" r="2.25" fill="#f4f8fc"/><path d="M13.5 0.2V5.5M10.8 2.8H16M10.8 7H16" stroke="#9a0c0c" stroke-width="1.4"/></g><g transform="translate(198,109)"><path d="M10.7 10.7L15 15" stroke="#6a3a10" stroke-width="2.8" stroke-linecap="round"/><path d="M10.7 10.7L14.5 14.5" stroke="#e89a40" stroke-width="1.4" stroke-linecap="round"/><circle cx="6.5" cy="6.5" r="6" fill="#d8e8f2" stroke="#505860" stroke-width="1.4"/><circle cx="5.0" cy="5.0" r="2.7" fill="#f4f8fc"/><path d="M3 3L5.5 5.5M10 3L7.5 5.5M3 10L5.5 7.5M10 10L7.5 7.5" stroke="#a00c0c" stroke-width="1.5"/><path d="M5.5 3.5V5.5H3.5M7.5 3.5V5.5H9.5M5.5 9.5V7.5H3.5M7.5 9.5V7.5H9.5" fill="none" stroke="#a00c0c" stroke-width="1.2"/><circle cx="6.5" cy="6.5" r="0.6" fill="#101010"/></g><g transform="translate(224,109)"><path d="M9.0 9.0L14.5 14.2" stroke="#6a3a10" stroke-width="2.8" stroke-linecap="round"/><path d="M9.0 9.0L14.0 13.7" stroke="#e89a40" stroke-width="1.4" stroke-linecap="round"/><circle cx="5.5" cy="5.5" r="5" fill="#d8e8f2" stroke="#505860" stroke-width="1.4"/><circle cx="4.0" cy="4.0" r="2.25" fill="#f4f8fc"/><path d="M11 0.5C8 0.5 6.5 2 6 4.5" fill="none" stroke="#1a5ab8" stroke-width="1.4"/><path d="M4 3.5L6 8L8.5 4Z" fill="#c00c0c"/></g><g transform="translate(250,109)"><path d="M0.5 4.5L4 8L11 1M3 15L14 4M4 4L15 15" fill="none" stroke="#a00c0c" stroke-width="1" transform="translate(0.7,0.7)"/><path d="M0.5 4.5L4 8L11 1M3 15L14 4M4 4L15 15" fill="none" stroke="#58a8f0" stroke-width="1.5"/></g><g transform="translate(276,109)"><path d="M2 4L10 12" stroke="#5a3010" stroke-width="3.2"/><path d="M2 4L10 12" stroke="#d89048" stroke-width="1.8"/><path d="M9 11L11 9L14 14.5L15.5 15.5L12 14.5Z" fill="#101010"/><path d="M13.5 0.8C10.5 0.8 9.3 2.5 9 5" fill="none" stroke="#1a5ab8" stroke-width="1.4"/><path d="M6.8 4L9 8.5L11.5 4.5Z" fill="#c00c0c"/></g><g transform="translate(302,109)"><path d="M4.5 0.5H9.5L11.5 2.5V7.5H4.5Z" fill="#e4f0fc" stroke="#4a7ad0" stroke-width="0.9"/><rect x="0.75" y="6.25" width="14.5" height="6" rx="1" fill="#f8f0e0" stroke="#a00c0c" stroke-width="1.5"/><path d="M1 8.8H15" stroke="#f0c830" stroke-width="1.2"/><rect x="2.75" y="11.75" width="11" height="3.5" fill="#f4d860" stroke="#a00c0c" stroke-width="1.3"/><circle cx="2.8" cy="10.5" r="0.9" fill="#20c020"/><circle cx="5" cy="10.5" r="0.7" fill="#e02020"/></g><g transform="translate(328,109)"><rect x="0.75" y="1.75" width="10" height="8.5" fill="#eef4fa" stroke="#2a6ad0" stroke-width="1.5"/><path d="M4.75 5.75H12.5L14.75 8V14.25H4.75Z" fill="#c8d6e2" stroke="#a00c0c" stroke-width="1.5"/><path d="M6 7.5H11" stroke="#f0f8ff" stroke-width="1"/></g><g transform="translate(354,109)"><rect x="0.75" y="0.75" width="14.5" height="14.5" fill="#cce2f2" stroke="#a00c0c" stroke-width="1.5"/><path d="M2.7 2V14.5" stroke="#1a1a5a" stroke-width="1.5"/><path d="M2.7 3V14" stroke="#f0d020" stroke-width="1.5" stroke-dasharray="1 1.2"/><rect x="5.5" y="3" width="3" height="3" fill="#3a6aaa" stroke="#1a3a6a" stroke-width="0.5"/><rect x="10" y="3" width="3" height="3" fill="#3a6aaa" stroke="#1a3a6a" stroke-width="0.5"/><rect x="5.5" y="7.5" width="3" height="3" fill="#3a6aaa" stroke="#1a3a6a" stroke-width="0.5"/><rect x="10" y="7.5" width="3" height="3" fill="#3a6aaa" stroke="#1a3a6a" stroke-width="0.5"/><rect x="9.8" y="11.2" width="3.4" height="3" fill="#f8e840" stroke="#8a7a10" stroke-width="0.6"/></g><g transform="translate(380,109)"><path d="M8 0.8L10.2 5.6L15.3 6.1L11.5 9.5L12.6 14.6L8 12L3.4 14.6L4.5 9.5L0.7 6.1L5.8 5.6Z" fill="#f8d830" stroke="#c88a18" stroke-width="1"/><path d="M8 3L9.3 6.5L13 7L9.5 8.5Z" fill="#fff8b0"/></g><g transform="translate(406,109)"><path d="M8 0.8L10.2 5.6L15.3 6.1L11.5 9.5L12.6 14.6L8 12L3.4 14.6L4.5 9.5L0.7 6.1L5.8 5.6Z" fill="#30aaf0" stroke="#c88a18" stroke-width="1"/></g><g transform="translate(432,109)"><rect x="0.5" y="0.5" width="15" height="14" fill="#e4e4e4" stroke="#c8c8c8" stroke-width="1"/><path d="M8 1V14.5M1 7.5H15.5" stroke="#c8c8c8" stroke-width="1"/><rect x="1.5" y="1.5" width="6.5" height="6" fill="#eaeaea" stroke="#303030" stroke-width="1.5"/></g><path d="M152.5 504.6A361.6 361.6 0 0 1 687.5 194.3" fill="none" stroke="#c040c8" stroke-width="1" shape-rendering="crispEdges"/><g transform="translate(152.5,504.5)" shape-rendering="crispEdges"><path d="M-7.5 -7.5L7.5 7.5M7.5 -7.5L-7.5 7.5" stroke="#ff1818" stroke-width="1"/><path d="M0 -8.5V8.5M-9 0H9" stroke="#40b4b4" stroke-width="1.1"/><rect x="-4" y="-4" width="8" height="8" fill="none" stroke="#40b4b4" stroke-width="1.1"/><path d="M-4 4L-2 2M4 4L2 2" stroke="#101010" stroke-width="1.1"/><path d="M0 -3V3M-3.5 0H3.5" stroke="#0000ff" stroke-width="1.5"/></g><g transform="translate(302.5,218.5)" shape-rendering="crispEdges"><path d="M-7.5 -7.5L7.5 7.5M7.5 -7.5L-7.5 7.5" stroke="#ff1818" stroke-width="1"/><path d="M0 -8.5V8.5M-9 0H9" stroke="#40b4b4" stroke-width="1.1"/><rect x="-4" y="-4" width="8" height="8" fill="none" stroke="#40b4b4" stroke-width="1.1"/><path d="M-4 4L-2 2M4 4L2 2" stroke="#101010" stroke-width="1.1"/><path d="M0 -3V3M-3.5 0H3.5" stroke="#0000ff" stroke-width="1.5"/></g><g transform="translate(687.5,194.5)"><path d="M-7 -7L7 7M7 -7L-7 7" stroke="#ffff90" stroke-width="1"/><path d="M-8 0L0 -8L8 0L0 8Z" fill="none" stroke="#404020" stroke-width="1"/><rect x="-1" y="-0.5" width="2" height="1.5" fill="#ff10c0"/></g><path d="M695.5 194.5L771.2 198.5V185.6H921.8V263.8H771.2V224.3Z" fill="#fff" stroke="#5a62b0" stroke-width="1.8" stroke-linejoin="miter"/><path d="M692.5 199V218.5L697.8 214.8L701.3 221.5L704.5 220L701.3 213.5H707Z" fill="#fff" stroke="#000" stroke-width="1.1" stroke-linejoin="miter"/></svg>
<div class="a" style="left:771px;top:190px;width:151px;text-align:center;font-size:19.7px;line-height:22.6px">The 3rd point is<br>selected with<br>the mouse</div>
</body></html>
